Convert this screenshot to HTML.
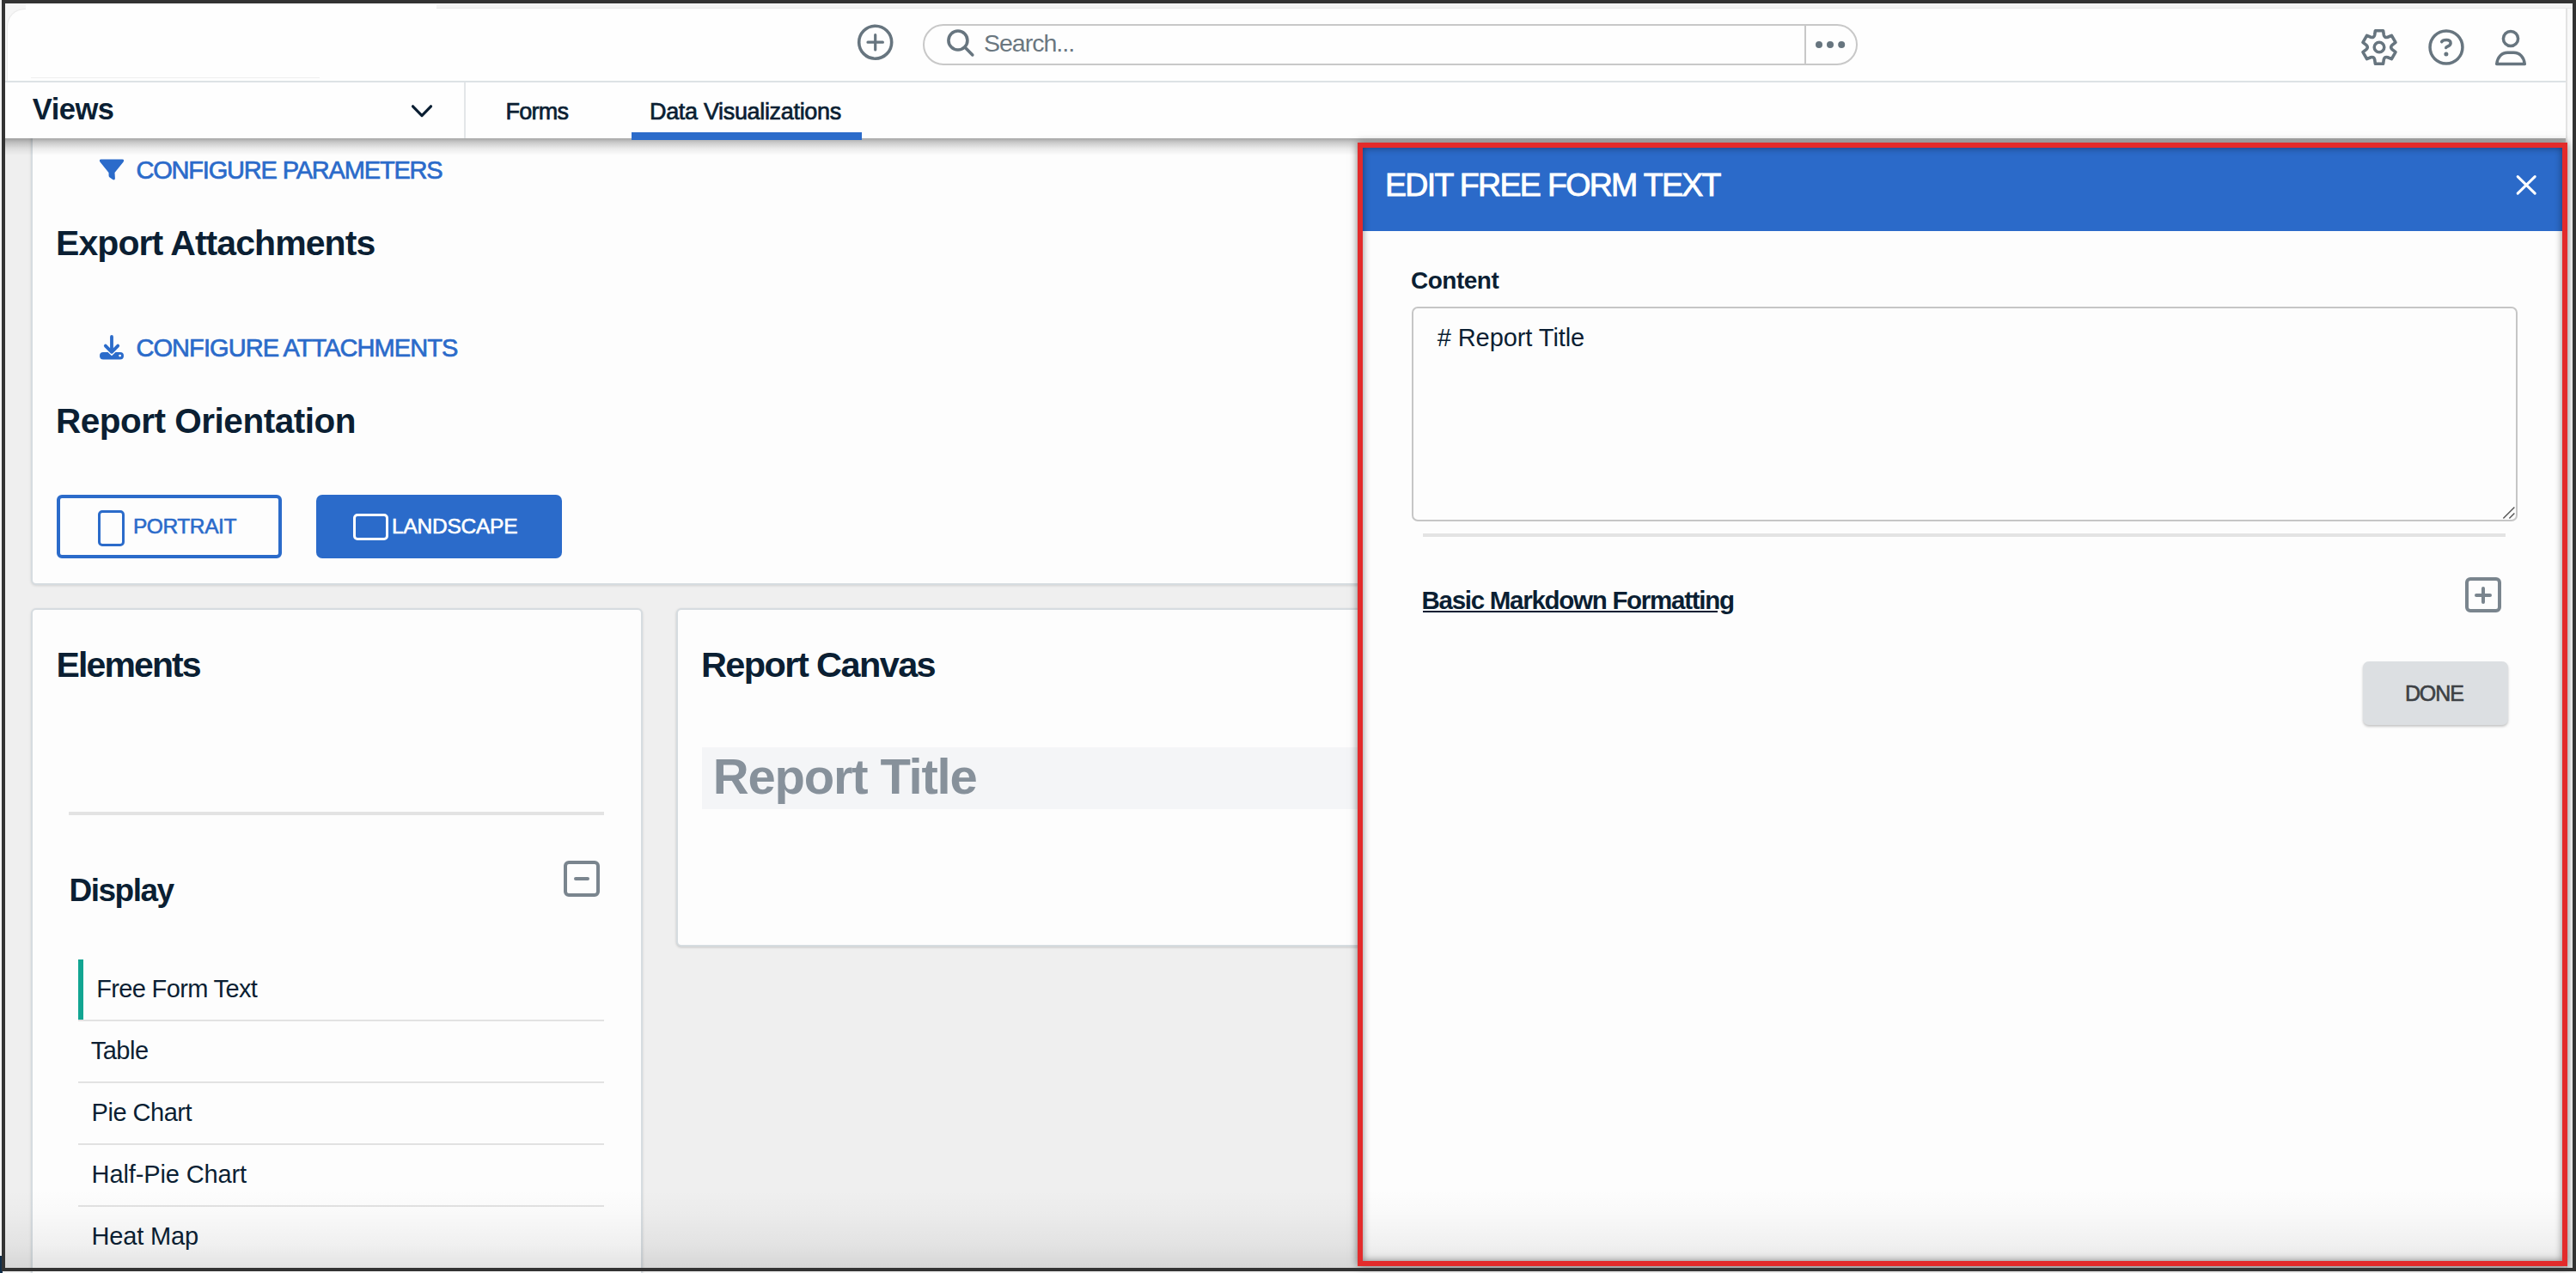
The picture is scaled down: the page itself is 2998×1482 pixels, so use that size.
<!DOCTYPE html>
<html><head><meta charset="utf-8">
<style>
html,body{margin:0;padding:0;}
body{width:2998px;height:1482px;position:relative;overflow:hidden;background:#f2f2f2;font-family:"Liberation Sans",sans-serif;}
.a{position:absolute;}
.t{position:absolute;line-height:1;white-space:nowrap;font-family:"Liberation Sans",sans-serif;}
.dk{color:#0b1f33;}
.bl{color:#2b6bca;}
svg{position:absolute;overflow:visible;}
</style></head><body>

<!-- page background -->
<div class="a" style="left:6px;top:4px;width:2988px;height:1472px;background:#efefef;"></div>

<!-- top card -->
<div class="a" style="left:36px;top:100px;width:2960px;height:577px;background:#fdfdfd;border:2px solid #d6dce0;border-radius:6px;box-shadow:0 1px 3px rgba(0,0,0,.12);"></div>

<!-- elements card -->
<div class="a" style="left:36px;top:708px;width:708px;height:800px;background:#fdfdfd;border:2px solid #d6dce0;border-radius:6px;box-shadow:0 1px 3px rgba(0,0,0,.12);"></div>

<!-- report canvas card -->
<div class="a" style="left:787px;top:708px;width:2200px;height:390px;background:#fdfdfd;border:2px solid #d6dce0;border-radius:6px;box-shadow:0 1px 3px rgba(0,0,0,.18);"></div>

<!-- top card content -->
<svg style="left:108px;top:178px" width="44" height="38" viewBox="0 0 44 38">
<path d="M9.5,7.6 L34.5,7.6 Q37,7.8 35.6,10.4 L25.5,23 L25.9,29.5 Q25.8,32.4 23.2,31 L19.6,28.6 Q18.7,27.8 18.6,26.8 L18.5,23 L8.4,10.4 Q7,7.8 9.5,7.6 Z" fill="#2b6bca"/>
</svg>
<div class="t bl" style="left:158.4px;top:184px;font-size:29px;font-weight:400;-webkit-text-stroke:0.7px #2b6bca;letter-spacing:-1.18px;">CONFIGURE PARAMETERS</div>
<div class="t dk" style="left:65px;top:263.2px;font-size:41px;font-weight:700;letter-spacing:-0.93px;">Export Attachments</div>

<svg style="left:108px;top:384px" width="44" height="40" viewBox="0 0 44 40">
<path d="M22,8 L22,24" stroke="#2b6bca" stroke-width="3.8" stroke-linecap="round" fill="none"/>
<path d="M14.8,18.6 L22,25.8 L29.2,18.6" stroke="#2b6bca" stroke-width="3.8" stroke-linecap="round" stroke-linejoin="round" fill="none"/>
<path d="M12.2,26 L17.5,26 L22,30.3 L26.5,26 L31.8,26 Q36,26 36,30.2 Q36,34.4 31.8,34.4 L12.2,34.4 Q8,34.4 8,30.2 Q8,26 12.2,26 Z" fill="#2b6bca"/>
<circle cx="31.6" cy="30.1" r="1.4" fill="#fff"/>
</svg>
<div class="t bl" style="left:158.5px;top:391.2px;font-size:29px;font-weight:400;-webkit-text-stroke:0.7px #2b6bca;letter-spacing:-0.94px;">CONFIGURE ATTACHMENTS</div>
<div class="t dk" style="left:65px;top:470px;font-size:40.5px;font-weight:700;letter-spacing:-0.49px;">Report Orientation</div>

<!-- portrait button -->
<div class="a" style="left:66px;top:576px;width:254px;height:66px;border:4px solid #2b6bca;border-radius:6px;background:#fdfdfd;"></div>
<div class="a" style="left:114px;top:594.2px;width:31.4px;height:41.6px;border:3.5px solid #2b6bca;border-radius:5px;box-sizing:border-box;"></div>
<div class="t bl" style="left:154.9px;top:601px;font-size:24.5px;font-weight:400;-webkit-text-stroke:0.6px #2b6bca;letter-spacing:-0.41px;">PORTRAIT</div>

<!-- landscape button -->
<div class="a" style="left:368px;top:576px;width:286px;height:74px;background:#2b6bca;border-radius:7px;"></div>
<div class="a" style="left:410.7px;top:598px;width:41.6px;height:31.2px;border:3.5px solid #fff;border-radius:5px;box-sizing:border-box;"></div>
<div class="t" style="left:456px;top:601px;font-size:24.5px;font-weight:400;-webkit-text-stroke:0.6px #fff;letter-spacing:-0.23px;color:#fff;">LANDSCAPE</div>

<!-- elements card content -->
<div class="t dk" style="left:65.6px;top:753.5px;font-size:41px;font-weight:700;letter-spacing:-1.9px;">Elements</div>
<div class="a" style="left:80px;top:945px;width:623px;height:4px;background:#e3e3e3;"></div>
<div class="t dk" style="left:80.4px;top:1018.3px;font-size:37px;font-weight:700;letter-spacing:-1.47px;">Display</div>
<div class="a" style="left:658.5px;top:1004.3px;width:36.6px;height:36.8px;border:4px solid #7a858e;border-radius:6px;box-sizing:border-box;width:41.6px;height:41.8px;left:656.2px;top:1002px;"></div>
<div class="a" style="left:668px;top:1021px;width:18px;height:4px;border-radius:2px;background:#7a858e;"></div>

<div class="a" style="left:91px;top:1117px;width:6px;height:71px;background:#12a592;"></div>
<div class="a" style="left:91px;top:1187px;width:612px;height:2px;background:#e2e2e2;"></div>
<div class="a" style="left:91px;top:1259px;width:612px;height:2px;background:#e2e2e2;"></div>
<div class="a" style="left:91px;top:1331px;width:612px;height:2px;background:#e2e2e2;"></div>
<div class="a" style="left:91px;top:1403px;width:612px;height:2px;background:#e2e2e2;"></div>
<div class="t dk" style="left:112.2px;top:1137.2px;font-size:29px;font-weight:400;letter-spacing:-0.65px;">Free Form Text</div>
<div class="t dk" style="left:105.7px;top:1209px;font-size:29px;font-weight:400;letter-spacing:-0.5px;">Table</div>
<div class="t dk" style="left:106.6px;top:1281.1px;font-size:29px;font-weight:400;letter-spacing:-0.49px;">Pie Chart</div>
<div class="t dk" style="left:106.6px;top:1353px;font-size:29px;font-weight:400;letter-spacing:-0.12px;">Half-Pie Chart</div>
<div class="t dk" style="left:106.6px;top:1424.8px;font-size:29px;font-weight:400;letter-spacing:-0.17px;">Heat Map</div>

<!-- report canvas content -->
<div class="t dk" style="left:816px;top:752.5px;font-size:41.5px;font-weight:700;letter-spacing:-1.6px;">Report Canvas</div>
<div class="a" style="left:817px;top:870px;width:2000px;height:72px;background:#f4f5f7;"></div>
<div class="t" style="left:829.8px;top:875.3px;font-size:58px;font-weight:700;letter-spacing:-1.2px;color:#87919b;">Report Title</div>

<!-- header -->
<div class="a" style="left:6px;top:4px;width:2980px;height:90px;background:#fefefe;"></div>
<div class="a" style="left:6px;top:94px;width:2980px;height:2px;background:#dde2e5;"></div>
<svg style="left:990px;top:20px" width="60" height="60" viewBox="0 0 60 60">
<circle cx="28.7" cy="29.2" r="19" stroke="#67757f" stroke-width="3.6" fill="none"/>
<path d="M20,29.2 L37.4,29.2 M28.7,20.5 L28.7,37.9" stroke="#67757f" stroke-width="3.2" stroke-linecap="round"/>
</svg>
<div class="a" style="left:1074px;top:28px;width:1084px;height:44px;border:2px solid #c8c8c8;border-radius:24px;background:#fefefe;"></div>
<div class="a" style="left:2100px;top:29px;width:2px;height:46px;background:#c8c8c8;"></div>
<svg style="left:1090px;top:20px" width="60" height="60" viewBox="0 0 60 60">
<circle cx="24.9" cy="27" r="11" stroke="#67757f" stroke-width="3.6" fill="none"/>
<path d="M33.2,35.3 L41.8,43.9" stroke="#67757f" stroke-width="3.6" stroke-linecap="round"/>
</svg>
<div class="t" style="left:1145px;top:36.2px;font-size:28.5px;font-weight:400;letter-spacing:-1px;color:#6a7780;">Search...</div>
<svg style="left:2100px;top:40px" width="60" height="24" viewBox="0 0 60 24">
<circle cx="17" cy="12" r="4" fill="#67757f"/><circle cx="30" cy="12" r="4" fill="#67757f"/><circle cx="43.2" cy="12" r="4" fill="#67757f"/>
</svg>
<svg style="left:2768.5px;top:55.2px" width="1" height="1" viewBox="0 0 1 1">
<path d="M-5.29,-14.40 L-4.60,-19.30 L4.60,-19.30 L5.29,-14.40 Q6.10,-10.57 9.83,-11.78 L14.41,-13.63 L19.01,-5.67 L15.12,-2.62 Q12.20,0.00 15.12,2.62 L19.01,5.67 L14.41,13.63 L9.83,11.78 Q6.10,10.57 5.29,14.40 L4.60,19.30 L-4.60,19.30 L-5.29,14.40 Q-6.10,10.57 -9.83,11.78 L-14.41,13.63 L-19.01,5.67 L-15.12,2.62 Q-12.20,0.00 -15.12,-2.62 L-19.01,-5.67 L-14.41,-13.63 L-9.83,-11.78 Q-6.10,-10.57 -5.29,-14.40 Z" stroke="#67757f" stroke-width="3.6" stroke-linejoin="round" fill="none"/>
<circle cx="0" cy="0" r="5.8" stroke="#67757f" stroke-width="3.5" fill="none"/>
</svg>
<svg style="left:2846.5px;top:55px" width="1" height="1" viewBox="0 0 1 1">
<circle cx="0" cy="0" r="18.95" stroke="#67757f" stroke-width="3.5" fill="none"/>
<path d="M-5.3,-6.4 Q-4.2,-8.4 0.2,-8.4 Q5.2,-8.4 5.1,-4.8 Q5,-2.4 1.5,-0.9 Q-0.4,0 -0.3,0.6" stroke="#67757f" stroke-width="3.5" stroke-linecap="round" stroke-linejoin="round" fill="none"/>
<circle cx="-0.1" cy="8" r="2.5" fill="#67757f"/>
</svg>
<svg style="left:2921.5px;top:44.6px" width="1" height="1" viewBox="0 0 1 1">
<circle cx="0" cy="0" r="8.6" stroke="#67757f" stroke-width="3.5" fill="none"/>
<path d="M-16.3,29.6 C-15.5,21.5 -10.5,16.2 -3.5,16.2 L3.5,16.2 C10.5,16.2 15.5,21.5 16.3,29.6 Z" stroke="#67757f" stroke-width="3.5" stroke-linejoin="round" fill="none"/>
</svg>

<!-- tab bar -->
<div class="a" style="left:6px;top:96px;width:2980px;height:65px;background:#fefefe;"></div>
<div class="a" style="left:6px;top:161px;width:2980px;height:20px;background:linear-gradient(rgba(0,0,0,.34),rgba(0,0,0,.2) 25%,rgba(0,0,0,.07) 60%,rgba(0,0,0,0));"></div>
<div class="t dk" style="left:37.8px;top:110px;font-size:34.5px;font-weight:700;letter-spacing:-0.5px;">Views</div>
<svg style="left:470px;top:110px" width="40" height="40" viewBox="0 0 40 40">
<path d="M10.5,13.8 L21,24.6 L31.5,13.8" stroke="#0b1f33" stroke-width="3.2" stroke-linecap="round" stroke-linejoin="round" fill="none"/>
</svg>
<div class="a" style="left:540px;top:96px;width:2px;height:65px;background:#e3e6e8;"></div>
<div class="t dk" style="left:588.5px;top:116.7px;font-size:27px;font-weight:400;-webkit-text-stroke:0.7px #0b1f33;letter-spacing:-0.75px;">Forms</div>
<div class="t dk" style="left:756px;top:116.7px;font-size:27px;font-weight:400;-webkit-text-stroke:0.7px #0b1f33;letter-spacing:-0.33px;">Data Visualizations</div>


<div class="a" style="left:735px;top:154px;width:268px;height:9px;background:#2b6bca;"></div>
<!-- right strip -->
<div class="a" style="left:2986px;top:4px;width:8px;height:1472px;background:#f9f9f9;"></div>
<div class="a" style="left:2986px;top:9px;width:2px;height:1467px;background:#e3e3e3;"></div>
<div class="a" style="left:6px;top:4px;width:2988px;height:1px;background:#fff;"></div>
<div class="a" style="left:508px;top:5px;width:2486px;height:4px;background:#f4f4f4;"></div>
<div class="a" style="left:508px;top:9px;width:2486px;height:1px;background:#e9e9e9;"></div>
<div class="a" style="left:6px;top:4px;width:24px;height:90px;background:#f6f6f6;"></div>
<div class="a" style="left:7.5px;top:9.5px;width:40px;height:84.5px;background:#fefefe;border-top-left-radius:20px;box-shadow:inset 1px 1px 0 #ececec;"></div>
<div class="a" style="left:30px;top:4px;width:478px;height:90px;background:#fefefe;"></div>
<div class="a" style="left:36px;top:89.5px;width:336px;height:1px;background:#f0f0f0;"></div>

<!-- drawer -->
<div class="a" style="left:1586px;top:172px;width:1396px;height:1296px;background:#fdfdfd;"></div>
<div class="a" style="left:1586px;top:172px;width:1396px;height:97px;background:#2b6ac9;"></div>
<div class="t" style="left:1612px;top:197.4px;font-size:37.5px;font-weight:400;-webkit-text-stroke:0.9px #fff;letter-spacing:-1.67px;color:#fff;">EDIT FREE FORM TEXT</div>
<svg style="left:2920px;top:195px" width="40" height="40" viewBox="0 0 40 40">
<path d="M10.2,10.7 L30.2,30.1 M30.2,10.7 L10.2,30.1" stroke="#fff" stroke-width="3.1" stroke-linecap="round"/>
</svg>
<div class="t dk" style="left:1642px;top:312.9px;font-size:28px;font-weight:700;letter-spacing:-0.5px;">Content</div>
<div class="a" style="left:1642.5px;top:357.4px;width:1283.5px;height:245.6px;border:2px solid #c6c6c6;border-radius:7px;background:#fdfdfd;"></div>
<div class="t dk" style="left:1672.7px;top:379.3px;font-size:29px;font-weight:400;letter-spacing:-0.07px;">&#35; Report Title</div>
<svg style="left:2900px;top:580px" width="30" height="30" viewBox="0 0 30 30">
<path d="M13.4,23.6 L26.4,10.6 M20.4,23.6 L26.4,17.6" stroke="#555" stroke-width="1.4"/>
</svg>
<div class="a" style="left:1656px;top:621px;width:1260px;height:4px;background:#e3e3e3;"></div>
<div class="t dk" style="left:1654.6px;top:684.3px;font-size:29.5px;font-weight:700;letter-spacing:-1.28px;">Basic Markdown Formatting</div>
<div class="a" style="left:1656px;top:710.5px;width:343px;height:2.2px;background:#0b1f33;"></div>
<div class="a" style="left:2869px;top:671.8px;width:41.8px;height:41.7px;border:4px solid #7a858e;border-radius:6px;box-sizing:border-box;"></div>
<div class="a" style="left:2880.2px;top:690.8px;width:20px;height:4px;border-radius:2px;background:#7a858e;"></div>
<div class="a" style="left:2888.2px;top:682.8px;width:4px;height:20px;border-radius:2px;background:#7a858e;"></div>
<div class="a" style="left:2749.5px;top:770px;width:169px;height:74px;background:#dcdfe2;border-radius:7px;box-shadow:0 2px 3px rgba(0,0,0,.22);"></div>
<div class="t" style="left:2798.9px;top:795.2px;font-size:25px;font-weight:400;-webkit-text-stroke:0.6px #3d4145;letter-spacing:-1.07px;color:#3d4145;">DONE</div>

<!-- bottom vignette -->
<div class="a" style="left:6px;top:1385px;width:2988px;height:91px;background:linear-gradient(rgba(0,0,0,0),rgba(0,0,0,.015) 30%,rgba(0,0,0,.05) 70%,rgba(0,0,0,.1));"></div>
<!-- red annotation -->
<div class="a" style="left:1580px;top:166px;width:1396px;height:1296px;border:6px solid #e32b2b;box-shadow:0 0 9px rgba(0,0,0,.5), inset 0 0 9px rgba(0,0,0,.45);"></div>


<div class="a" style="left:0;top:1462px;width:3px;height:20px;background:linear-gradient(90deg,#0d2a45,#1b3550);"></div>
<!-- frame -->
<div class="a" style="left:2px;top:0;width:2988px;height:1472px;border:4px solid #333;"></div>
</body></html>
